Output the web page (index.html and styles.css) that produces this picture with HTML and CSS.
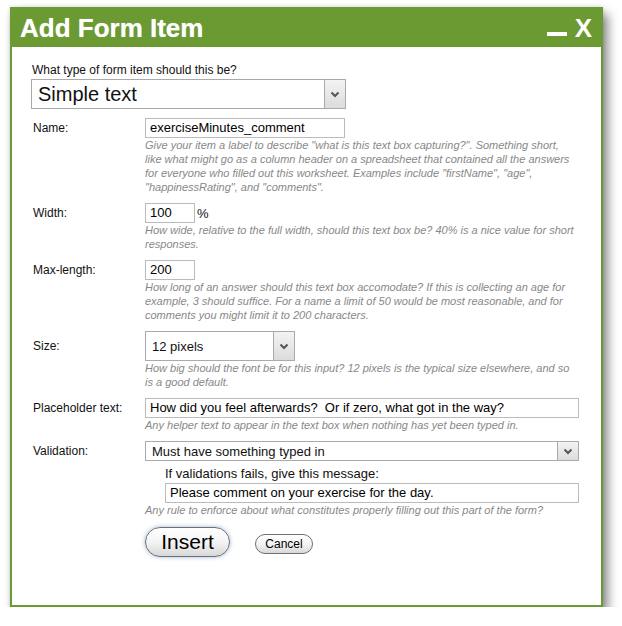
FILE: index.html
```html
<!DOCTYPE html>
<html>
<head>
<meta charset="utf-8">
<title>Add Form Item</title>
<link rel="stylesheet" href="styles.css">
</head>
<body>
<div class="dialog">
  <div class="titlebar">
    <h1 class="title">Add Form Item</h1>
    <div class="controls">
      <span class="min"></span>
      <span class="close">X</span>
    </div>
  </div>
  <div class="body">
    <div class="type-label">What type of form item should this be?</div>
    <div class="select select-big">
      <span class="select-text">Simple text</span>
      <span class="select-btn"><svg width="10" height="7" viewBox="0 0 10 7"><path d="M1.5 1.5 L5 5 L8.5 1.5" fill="none" stroke="#555" stroke-width="2"/></svg></span>
    </div>

    <div class="row">
      <div class="label">Name:</div>
      <div class="field">
        <div class="input input-name">exerciseMinutes_comment</div>
        <div class="help">Give your item a label to describe "what is this text box capturing?". Something short,<br>like what might go as a column header on a spreadsheet that contained all the answers<br>for everyone who filled out this worksheet. Examples include "firstName", "age",<br>"happinessRating", and "comments".</div>
      </div>
    </div>

    <div class="row">
      <div class="label">Width:</div>
      <div class="field">
        <div class="inline"><div class="input input-short">100</div><span class="unit">%</span></div>
        <div class="help">How wide, relative to the full width, should this text box be? 40% is a nice value for short<br>responses.</div>
      </div>
    </div>

    <div class="row">
      <div class="label">Max-length:</div>
      <div class="field">
        <div class="input input-short">200</div>
        <div class="help">How long of an answer should this text box accomodate? If this is collecting an age for<br>example, 3 should suffice. For a name a limit of 50 would be most reasonable, and for<br>comments you might limit it to 200 characters.</div>
      </div>
    </div>

    <div class="row">
      <div class="label label-tall">Size:</div>
      <div class="field">
        <div class="select select-size">
          <span class="select-text">12 pixels</span>
          <span class="select-btn"><svg width="10" height="7" viewBox="0 0 10 7"><path d="M1.5 1.5 L5 5 L8.5 1.5" fill="none" stroke="#555" stroke-width="2"/></svg></span>
        </div>
        <div class="help">How big should the font be for this input? 12 pixels is the typical size elsewhere, and so<br>is a good default.</div>
      </div>
    </div>

    <div class="row">
      <div class="label">Placeholder text:</div>
      <div class="field">
        <div class="input input-wide">How did you feel afterwards?  Or if zero, what got in the way?</div>
        <div class="help">Any helper text to appear in the text box when nothing has yet been typed in.</div>
      </div>
    </div>

    <div class="row">
      <div class="label">Validation:</div>
      <div class="field">
        <div class="select select-valid">
          <span class="select-text">Must have something typed in</span>
          <span class="select-btn"><svg width="10" height="7" viewBox="0 0 10 7"><path d="M1.5 1.5 L5 5 L8.5 1.5" fill="none" stroke="#555" stroke-width="2"/></svg></span>
        </div>
        <div class="sub">
          <div class="sub-label">If validations fails, give this message:</div>
          <div class="input input-msg">Please comment on your exercise for the day.</div>
        </div>
        <div class="help">Any rule to enforce about what constitutes properly filling out this part of the form?</div>
      </div>
    </div>

    <div class="row row-buttons">
      <div class="label"></div>
      <div class="buttons">
        <button class="btn btn-insert">Insert</button>
        <button class="btn btn-cancel">Cancel</button>
      </div>
    </div>
  </div>
</div>
</body>
</html>
```
FILE: styles.css
```css
html, body {
  margin: 0;
  padding: 0;
  background: #ffffff;
}

body {
  font-family: "Liberation Sans", Arial, sans-serif;
  color: #111;
}

.dialog {
  box-sizing: border-box;
  margin: 7px 0 0 10px;
  width: 593px;
  height: 600px;
  border: 2px solid #6a9a31;
  background: #fff;
  box-shadow: 5px 7px 10px rgba(0, 0, 0, 0.45), 0 0 4px rgba(0, 0, 0, 0.15);
}

.titlebar {
  height: 38px;
  background: #6a9a31;
  display: flex;
  align-items: center;
  justify-content: space-between;
  padding: 0 9px 0 8px;
}

.title {
  margin: 0;
  font-size: 26px;
  font-weight: bold;
  color: #fff;
  line-height: 38px;
  text-shadow: 0 0 1px rgba(255, 255, 255, 0.6);
}

.controls {
  display: flex;
  align-items: center;
  gap: 8px;
}

.min {
  display: block;
  width: 20px;
  height: 4px;
  background: #fff;
  margin-top: 12px;
}

.close {
  font-size: 26px;
  font-weight: bold;
  color: #fff;
  line-height: 38px;
}

.body {
  padding: 16px 0 0 20px;
}

.type-label {
  font-size: 12px;
  line-height: 14px;
  color: #111;
}

.select {
  box-sizing: border-box;
  display: flex;
  align-items: stretch;
  border: 1px solid #aaa;
  background: #fff;
}

.select-text {
  flex: 1;
  display: flex;
  align-items: center;
  white-space: nowrap;
  overflow: hidden;
}

.select-btn {
  width: 20px;
  display: flex;
  align-items: center;
  justify-content: center;
  border-left: 1px solid #aaa;
  background: linear-gradient(#f3f3f3, #dcdcdc);
}

.select-big {
  margin-top: 2px;
  margin-left: -1px;
  width: 315px;
  height: 30px;
}

.select-big .select-text {
  font-size: 20px;
  padding-left: 6px;
}

.select-size {
  width: 150px;
  height: 30px;
}

.select-size .select-text,
.select-valid .select-text {
  font-size: 13px;
  padding-left: 6px;
}

.select-valid {
  width: 434px;
  height: 20px;
}

.row {
  display: grid;
  grid-template-columns: 113px 1fr;
  margin-top: 9px;
}

.label {
  font-size: 12px;
  line-height: 20px;
  padding-left: 1px;
  color: #111;
}

.label-tall {
  line-height: 30px;
}

.input {
  box-sizing: border-box;
  height: 20px;
  border: 1px solid #bbb;
  background: #fff;
  font-size: 13px;
  line-height: 18px;
  padding-left: 4px;
  white-space: pre;
  color: #000;
}

.input-name {
  width: 200px;
}

.input-short {
  width: 50px;
}

.input-wide {
  width: 434px;
}

.input-msg {
  width: 414px;
}

.inline {
  display: flex;
  align-items: center;
}

.unit {
  font-size: 13px;
  margin-left: 2px;
}

.help {
  font-size: 11px;
  line-height: 14px;
  font-style: italic;
  color: #888;
  white-space: nowrap;
}

.sub {
  padding-left: 20px;
  margin-top: 5px;
}

.sub-label {
  font-size: 13px;
  line-height: 15px;
  margin-bottom: 2px;
}

.row-buttons {
  margin-top: 10px;
}

.buttons {
  display: flex;
  align-items: center;
  gap: 25px;
}

.btn {
  font-family: "Liberation Sans", Arial, sans-serif;
  border: 1px solid #6f6f6f;
  background: linear-gradient(#ffffff 0%, #f4f4f4 50%, #d8d8d8 100%);
  color: #000;
  padding: 0;
  cursor: pointer;
}

.btn-insert {
  width: 85px;
  height: 30px;
  border-radius: 15px;
  font-size: 21px;
  box-shadow: 0 0 4px rgba(90, 130, 200, 0.6);
}

.btn-cancel {
  width: 58px;
  height: 20px;
  border-radius: 10px;
  font-size: 12px;
  margin-top: 4px;
}
```
